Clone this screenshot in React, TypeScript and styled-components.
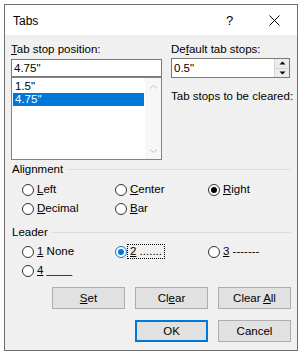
import React from 'react';
import styled, { createGlobalStyle, css } from 'styled-components';

const GlobalStyle = createGlobalStyle`
  html, body {
    margin: 0;
    padding: 0;
    background: #ffffff;
  }
  body {
    font-family: "Liberation Sans", Arial, sans-serif;
    font-size: 11.5px;
    color: #000;
  }
`;

const Dialog = styled.div`
  margin: 4px 0 0 4px;
  width: 294px;
  height: 347px;
  box-sizing: border-box;
  border: 1px solid #707070;
  background: #f0f0f0;
  display: flex;
  flex-direction: column;
`;

const TitleBar = styled.div`
  height: 30px;
  flex: none;
  background: #ffffff;
  display: flex;
  align-items: center;
`;

const TitleText = styled.div`
  flex: 1;
  padding: 2px 0 0 8px;
  line-height: 15px;
  font-size: 12px;
`;

const TitleButton = styled.div`
  width: 45px;
  height: 30px;
  display: flex;
  align-items: center;
  justify-content: center;
  font-size: 13px;
  padding-top: 1px;
  box-sizing: border-box;
`;

const Body = styled.div`
  flex: 1;
  padding: 7px 6px 0 6px;
  display: flex;
  flex-direction: column;
`;

const TopGrid = styled.div`
  display: grid;
  grid-template-columns: 151px 1fr;
  column-gap: 9px;
`;

const Column = styled.div`
  display: flex;
  flex-direction: column;
`;

const FieldLabel = styled.div<{ $gap?: number }>`
  line-height: 15px;
  margin-bottom: ${p => p.$gap ?? 2}px;
  white-space: nowrap;
`;

const Key = styled.span`
  text-decoration: underline;
  text-underline-offset: 1px;
`;

const TextInput = styled.div`
  height: 18px;
  box-sizing: border-box;
  border: 1px solid #7a7a7a;
  background: #fff;
  padding-left: 2px;
  line-height: 16px;
`;

const ListBox = styled.div`
  height: 83px;
  box-sizing: border-box;
  border: 1px solid #828282;
  background: #fff;
  display: flex;
`;

const ListItems = styled.div`
  flex: 1;
  padding: 2px 1px 0 1px;
`;

const ListRow = styled.div<{ $selected?: boolean }>`
  height: 13px;
  line-height: 13px;
  padding-left: 2px;
  ${p =>
    p.$selected &&
    css`
      background: #0078d7;
      color: #fff;
    `}
`;

const ScrollBar = styled.div`
  width: 16px;
  background: #f7f7f7;
  display: flex;
  flex-direction: column;
  justify-content: space-between;
`;

const ScrollArrow = styled.div`
  height: 17px;
  display: flex;
  align-items: center;
  justify-content: center;
`;

const SpinBox = styled.div`
  width: 119px;
  height: 20px;
  box-sizing: border-box;
  border: 1px solid #7a7a7a;
  background: #fff;
  display: flex;
`;

const SpinValue = styled.div`
  flex: 1;
  padding-left: 2px;
  line-height: 18px;
`;

const Spinner = styled.div`
  width: 14px;
  display: flex;
  flex-direction: column;
  border-left: 1px solid #d4d4d4;
`;

const SpinPart = styled.div<{ $top?: boolean }>`
  flex: 1;
  display: flex;
  align-items: center;
  justify-content: center;
  background: #ececec;
  ${p => p.$top && css`border-bottom: 1px solid #d4d4d4;`}
`;

const ClearLabel = styled.div`
  margin-top: 11px;
  line-height: 15px;
  white-space: nowrap;
`;

const GroupHeader = styled.div<{ $top: number }>`
  margin-top: ${p => p.$top}px;
  height: 15px;
  line-height: 15px;
  padding-left: 1px;
  display: flex;
  align-items: center;
  gap: 4px;

  &::after {
    content: '';
    flex: 1;
    height: 1px;
    background: #dcdcdc;
  }
`;

const RadioGrid = styled.div<{ $top: number }>`
  margin-top: ${p => p.$top}px;
  padding-left: 11px;
  display: grid;
  grid-template-columns: repeat(3, 93px);
  grid-auto-rows: 19px;
`;

const RadioItem = styled.div`
  display: flex;
  align-items: center;
  gap: 1px;
  white-space: nowrap;
`;

const RadioCircle = styled.span<{ $checked?: boolean; $accent?: boolean }>`
  width: 12px;
  height: 12px;
  box-sizing: border-box;
  border-radius: 50%;
  border: 1px solid ${p => (p.$accent ? '#0078d7' : '#333333')};
  background: #fff;
  display: flex;
  align-items: center;
  justify-content: center;

  &::after {
    content: '';
    width: 6px;
    height: 6px;
    border-radius: 50%;
    background: ${p => (p.$accent ? '#0078d7' : '#000')};
    display: ${p => (p.$checked ? 'block' : 'none')};
  }
`;

const RadioText = styled.span<{ $focus?: boolean }>`
  padding: 0 2px;
  line-height: 13px;
  outline: ${p => (p.$focus ? '1px dotted #000' : 'none')};
  outline-offset: 0;
`;

const ButtonRow = styled.div<{ $top: number }>`
  margin-top: ${p => p.$top}px;
  display: flex;
  justify-content: flex-end;
  gap: 10px;
`;

const Button = styled.button<{ $default?: boolean }>`
  width: 73px;
  height: 22px;
  box-sizing: border-box;
  border: 1px solid #adadad;
  background: #e1e1e1;
  font: inherit;
  color: #000;
  padding: 0;
  ${p => p.$default && css`border: 2px solid #0078d7;`}
`;

const Chevron = ({ down }: { down?: boolean }) => (
  <svg width="9" height="6" viewBox="0 0 9 6">
    <path
      d={down ? 'M1 1.5 L4.5 4.5 L8 1.5' : 'M1 4.5 L4.5 1.5 L8 4.5'}
      fill="none"
      stroke="#c2c2c2"
      strokeWidth="1"
    />
  </svg>
);

const Triangle = ({ down }: { down?: boolean }) => (
  <svg width="7" height="4" viewBox="0 0 7 4">
    <path d={down ? 'M0.5 0.5 L6.5 0.5 L3.5 3.5 Z' : 'M0.5 3.5 L6.5 3.5 L3.5 0.5 Z'} fill="#000" />
  </svg>
);

const CloseIcon = () => (
  <svg width="11" height="11" viewBox="0 0 11 11">
    <path d="M0.5 0.5 L10.5 10.5 M10.5 0.5 L0.5 10.5" stroke="#000" strokeWidth="1" />
  </svg>
);

const Radio = ({
  label,
  checked,
  accent,
  focus,
}: {
  label: React.ReactNode;
  checked?: boolean;
  accent?: boolean;
  focus?: boolean;
}) => (
  <RadioItem>
    <RadioCircle $checked={checked} $accent={accent} />
    <RadioText $focus={focus}>{label}</RadioText>
  </RadioItem>
);

const App: React.FC = () => {
  return (
    <>
      <GlobalStyle />
      <Dialog>
        <TitleBar>
          <TitleText>Tabs</TitleText>
          <TitleButton>?</TitleButton>
          <TitleButton>
            <CloseIcon />
          </TitleButton>
        </TitleBar>

        <Body>
          <TopGrid>
            <Column>
              <FieldLabel>
                <Key>T</Key>ab stop position:
              </FieldLabel>
              <TextInput>4.75"</TextInput>
              <ListBox>
                <ListItems>
                  <ListRow>1.5"</ListRow>
                  <ListRow $selected>4.75"</ListRow>
                </ListItems>
                <ScrollBar>
                  <ScrollArrow>
                    <Chevron />
                  </ScrollArrow>
                  <ScrollArrow>
                    <Chevron down />
                  </ScrollArrow>
                </ScrollBar>
              </ListBox>
            </Column>

            <Column>
              <FieldLabel $gap={1}>
                De<Key>f</Key>ault tab stops:
              </FieldLabel>
              <SpinBox>
                <SpinValue>0.5"</SpinValue>
                <Spinner>
                  <SpinPart $top>
                    <Triangle />
                  </SpinPart>
                  <SpinPart>
                    <Triangle down />
                  </SpinPart>
                </Spinner>
              </SpinBox>
              <ClearLabel>Tab stops to be cleared:</ClearLabel>
            </Column>
          </TopGrid>

          <GroupHeader $top={2}>Alignment</GroupHeader>
          <RadioGrid $top={3}>
            <Radio label={<><Key>L</Key>eft</>} />
            <Radio label={<><Key>C</Key>enter</>} />
            <Radio label={<><Key>R</Key>ight</>} checked />
            <Radio label={<><Key>D</Key>ecimal</>} />
            <Radio label={<><Key>B</Key>ar</>} />
          </RadioGrid>

          <GroupHeader $top={7}>Leader</GroupHeader>
          <RadioGrid $top={2}>
            <Radio label={<><Key>1</Key> None</>} />
            <Radio label={<><Key>2</Key> .......</>} checked accent focus />
            <Radio label={<><Key>3</Key> -------</>} />
            <Radio label={<><Key>4</Key> ____</>} />
          </RadioGrid>

          <ButtonRow $top={7}>
            <Button>
              <Key>S</Key>et
            </Button>
            <Button>
              Cl<Key>e</Key>ar
            </Button>
            <Button>
              Clear <Key>A</Key>ll
            </Button>
          </ButtonRow>
          <ButtonRow $top={11}>
            <Button $default>OK</Button>
            <Button>Cancel</Button>
          </ButtonRow>
        </Body>
      </Dialog>
    </>
  );
};

export default App;
